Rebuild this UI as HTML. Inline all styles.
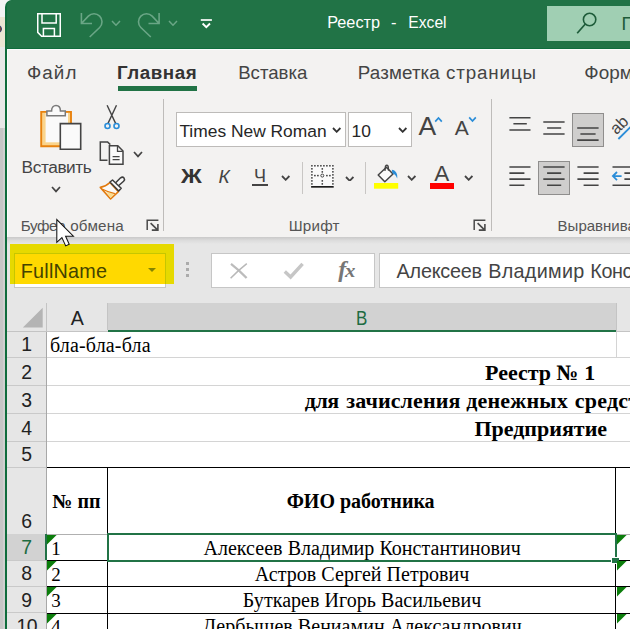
<!DOCTYPE html>
<html lang="ru"><head><meta charset="utf-8"><title>Реестр - Excel</title>
<style>
html,body{margin:0;padding:0;}
body{width:630px;height:629px;overflow:hidden;position:relative;background:#c6c6c6;}
#root{position:absolute;left:0;top:0;width:630px;height:629px;overflow:hidden;isolation:isolate;}
.b{position:absolute;display:block;}
.t{position:absolute;display:block;white-space:pre;}
</style></head><body><div id="root">
<div class="b" style="left:0px;top:0px;width:630px;height:629px;background:#c6c6c6;"></div>
<div class="b" style="left:0px;top:0px;width:16px;height:17px;background:#f3f3f3;"></div>
<div class="b" style="left:0px;top:17px;width:5px;height:30px;background:#ece5d3;"></div>
<div class="b" style="left:0px;top:47px;width:5px;height:81px;background:#e8e8e8;"></div>
<div class="b" style="left:-6px;top:25px;width:8.2px;height:8.2px;background:#9a4a24;border-radius:50%;border:1px solid #2a3f7a;box-sizing:border-box;"></div>
<div class="b" style="left:3px;top:128px;width:2px;height:501px;background:#d0d0d0;"></div>
<div class="b" style="left:5px;top:0;width:625px;height:629px;background:#0f6c3c;border-top-left-radius:7px;overflow:hidden">
<div class="b" style="left:1.6px;top:0;width:624px;height:48px;background:#217346;border-top-left-radius:6px"></div>
<div class="b" style="left:2px;top:49px;width:623px;height:580px;background:#fcfcfc"></div>
<div class="b" style="left:3px;top:50px;width:622px;height:579px;background:#f3f2f1"></div>
</div>
<svg class="b" style="left:36px;top:12px;" width="26" height="26" viewBox="0 0 26 26"><path d="M1.75 1.75 H24.25 V24.25 H5.6 L1.75 20.4 Z M6 1.75 V11 H20.2 V1.75 M7.4 24.25 V16.6 H18.4 V24.25" fill="none" stroke="#fff" stroke-width="1.5"/></svg>
<svg class="b" style="left:79px;top:11px;" width="26" height="28" viewBox="0 0 26 28"><path d="M2.4 2 V12.5 H13 M2.4 12.5 L9.34 5.14 A8 8 0 1 1 20.66 16.46 L10.7 26" fill="none" stroke="#6aa686" stroke-width="1.6"/></svg>
<svg class="b" style="left:111.4px;top:20.2px;" width="10" height="6.2" viewBox="0 0 10 6.2"><path d="M1 1 L5.0 5.2 L9 1" fill="none" stroke="#6aa686" stroke-width="1.5"/></svg>
<svg class="b" style="left:136px;top:11px;" width="26" height="28" viewBox="0 0 26 28"><path d="M23.1 2 V12.5 H12.5 M23.1 12.5 L16.16 5.14 A8 8 0 1 0 4.84 16.46 L14.8 26" fill="none" stroke="#6aa686" stroke-width="1.6"/></svg>
<svg class="b" style="left:168.4px;top:20.2px;" width="10" height="6.2" viewBox="0 0 10 6.2"><path d="M1 1 L5.0 5.2 L9 1" fill="none" stroke="#6aa686" stroke-width="1.5"/></svg>
<svg class="b" style="left:200px;top:18px;" width="13" height="12" viewBox="0 0 13 12"><path d="M0.8 2 H11.9" stroke="#fff" stroke-width="1.7" fill="none"/><path d="M2.6 5.5 L6.3 9.2 L10 5.5" stroke="#fff" stroke-width="1.9" fill="none"/></svg>
<span class="t" style='left:327.20px;top:14px;font:normal 400 16.27px/1 "Liberation Sans", sans-serif;color:#fff;'>Реестр</span>
<span class="t" style='left:391.10px;top:14px;font:normal 400 16.5px/1 "Liberation Sans", sans-serif;color:#fff;letter-spacing:0.516px;'>-</span>
<span class="t" style='left:408.35px;top:15px;font:normal 400 15.65px/1 "Liberation Sans", sans-serif;color:#fff;'>Excel</span>
<div class="b" style="left:547px;top:6px;width:83px;height:35px;background:#a0cfb3;"></div>
<svg class="b" style="left:575px;top:11px;" width="26" height="24" viewBox="0 0 26 24"><circle cx="14.6" cy="8.5" r="6.2" fill="none" stroke="#1e5c3a" stroke-width="1.6"/><path d="M10.3 13 L2.2 22.2" stroke="#1e5c3a" stroke-width="1.7"/></svg>
<span class="t" style='left:621.43px;top:15px;font:normal 400 18.4px/1 "Liberation Sans", sans-serif;color:#1e5c3a;'>П</span>
<span class="t" style='left:26.92px;top:64px;font:normal 400 18.8px/1 "Liberation Sans", sans-serif;color:#444;letter-spacing:1.116px;'>Файл</span>
<span class="t" style='left:117.08px;top:64px;font:normal 700 18.8px/1 "Liberation Sans", sans-serif;color:#333;letter-spacing:0.528px;'>Главная</span>
<div class="b" style="left:118px;top:86.2px;width:78.8px;height:4.4px;background:#217346;"></div>
<span class="t" style='left:238.21px;top:64px;font:normal 400 18.6px/1 "Liberation Sans", sans-serif;color:#444;letter-spacing:-0.01px;'>Вставка</span>
<span class="t" style='left:357.80px;top:64px;font:normal 400 18.8px/1 "Liberation Sans", sans-serif;color:#444;letter-spacing:0.12px;'>Разметка</span>
<span class="t" style='left:446.00px;top:64px;font:normal 400 18.8px/1 "Liberation Sans", sans-serif;color:#444;letter-spacing:0.855px;'>страницы</span>
<span class="t" style='left:584.31px;top:64px;font:normal 400 18.9px/1 "Liberation Sans", sans-serif;color:#444;'>Форм</span>
<svg class="b" style="left:38px;top:103px;" width="46" height="49" viewBox="0 0 46 49">
<path d="M3.2 8.9 H33 V43.2 H3.2 Z" fill="#fad48c" stroke="#e8820e" stroke-width="1.9"/>
<path d="M7.6 10 H30 V39.3 H7.6 Z" fill="#fafafa"/>
<path d="M8.9 12.8 V8 H13.6 C13.6 4.2 15.8 2.6 18 2.6 C20.2 2.6 22.4 4.2 22.4 8 H27.3 V12.8 Z" fill="#fafafa" stroke="#7a7a7a" stroke-width="1.5"/>
<path d="M22.3 20.6 H42.7 V46.2 H22.3 Z" fill="#fafafa" stroke="#444" stroke-width="1.6"/>
</svg>
<span class="t" style='left:21.62px;top:159px;font:normal 400 17.3px/1 "Liberation Sans", sans-serif;color:#444;letter-spacing:-0.433px;'>Вставить</span>
<svg class="b" style="left:51.2px;top:186.4px;" width="10" height="6.4" viewBox="0 0 10 6.4"><path d="M1 1 L5.0 5.4 L9 1" fill="none" stroke="#444" stroke-width="1.7"/></svg>
<svg class="b" style="left:101px;top:103px;" width="22" height="28" viewBox="0 0 22 28">
<path d="M6.1 2.3 L14.6 20.4 M15.5 2.3 L7 20.4" stroke="#444" stroke-width="1.4" fill="none"/>
<circle cx="6.5" cy="23" r="2.5" fill="none" stroke="#2a8dd8" stroke-width="1.6"/>
<circle cx="15.5" cy="23" r="2.5" fill="none" stroke="#2a8dd8" stroke-width="1.6"/>
</svg>
<svg class="b" style="left:98.1px;top:139px;" width="28" height="28" viewBox="0 0 28 28">
<path d="M9.5 21.3 H2.3 V2.9 H9.6 L12.3 5.6" fill="none" stroke="#444" stroke-width="1.5"/>
<path d="M11.4 6.8 H19.8 L25 12 V25.2 H11.4 Z" fill="#fafafa" stroke="#444" stroke-width="1.5"/>
<path d="M19.5 7 V12.3 H24.8" fill="none" stroke="#444" stroke-width="1.3"/>
<path d="M14.6 17.6 H21.6 M14.6 20.7 H21.6" stroke="#444" stroke-width="1.2"/>
</svg>
<svg class="b" style="left:133.2px;top:151.3px;" width="10" height="6.4" viewBox="0 0 10 6.4"><path d="M1 1 L5.0 5.4 L9 1" fill="none" stroke="#444" stroke-width="1.7"/></svg>
<svg class="b" style="left:98px;top:174px;" width="30" height="28" viewBox="0 0 30 28">
<path d="M11.9 8.5 Q7.5 12.6 2.3 13.4 L12.6 25 L20.4 17.7 Z" fill="#fbfaf8" stroke="#e2790c" stroke-width="1.6" stroke-linejoin="round"/>
<path d="M8 17.7 L16.3 20.1 L12.6 23.9 Z" fill="#fbdc8e"/>
<path d="M4.5 15.3 Q10 18.2 16.9 19.6" stroke="#e2790c" stroke-width="1.3" fill="none"/>
<path d="M17.4 9 L22.6 3.8 Q24.6 2.4 26 4 Q27.2 5.6 25.6 7.2 L20.2 12" fill="#fafafa" stroke="#3d3d3d" stroke-width="1.5" stroke-linejoin="round"/>
<path d="M12 8 L14.5 6 L23.2 14.2 L20.7 17 Z" fill="#fafafa" stroke="#3d3d3d" stroke-width="1.5" stroke-linejoin="round"/>
</svg>
<span class="t" style='left:20.78px;top:218px;font:normal 400 15.2px/1 "Liberation Sans", sans-serif;color:#555;letter-spacing:-0.463px;'>Буфер</span>
<span class="t" style='left:70.19px;top:218px;font:normal 400 15.2px/1 "Liberation Sans", sans-serif;color:#555;letter-spacing:0.203px;'>обмена</span>
<svg class="b" style="left:145.5px;top:219.3px;" width="14" height="12" viewBox="0 0 14 12"><path d="M1.2 11 V1.2 H12.4" fill="none" stroke="#4a4a4a" stroke-width="1.5"/><path d="M4.6 4.2 L11.3 10.6 M11.9 5 V11.1 H5.8" fill="none" stroke="#4a4a4a" stroke-width="1.6"/></svg>
<div class="b" style="left:162.8px;top:99px;width:1.1px;height:131.5px;background:#bebcba;"></div>
<div class="b" style="left:176px;top:112px;width:170px;height:35px;background:#fff;border:1px solid #bdbbb9;box-sizing:border-box;"></div>
<span class="t" style='left:179.40px;top:123px;font:normal 400 17.4px/1 "Liberation Sans", sans-serif;color:#262626;'>Times New Roman</span>
<svg class="b" style="left:332.3px;top:127.1px;" width="9.4" height="5.8" viewBox="0 0 9.4 5.8"><path d="M1 1 L4.7 4.8 L8.4 1" fill="none" stroke="#333" stroke-width="1.8"/></svg>
<div class="b" style="left:348px;top:112px;width:64px;height:35px;background:#fff;border:1px solid #bdbbb9;box-sizing:border-box;"></div>
<span class="t" style='left:351.60px;top:123px;font:normal 400 17.4px/1 "Liberation Sans", sans-serif;color:#262626;'>10</span>
<svg class="b" style="left:398.3px;top:127.1px;" width="9.4" height="5.8" viewBox="0 0 9.4 5.8"><path d="M1 1 L4.7 4.8 L8.4 1" fill="none" stroke="#333" stroke-width="1.8"/></svg>
<span class="t" style='left:418.40px;top:113px;font:normal 400 26.5px/1 "Liberation Sans", sans-serif;color:#444;'>A</span>
<svg class="b" style="left:434px;top:116px;" width="9" height="7" viewBox="0 0 9 7"><path d="M1.2 5.6 L4.5 2 L7.8 5.6" fill="none" stroke="#2a8dd8" stroke-width="1.7"/></svg>
<span class="t" style='left:454.80px;top:117px;font:normal 400 21px/1 "Liberation Sans", sans-serif;color:#444;'>A</span>
<svg class="b" style="left:467.6px;top:116px;" width="9" height="7" viewBox="0 0 9 7"><path d="M1.2 1.4 L4.5 5 L7.8 1.4" fill="none" stroke="#2a8dd8" stroke-width="1.7"/></svg>
<span class="t" style='left:181.40px;top:167px;font:normal 700 19.6px/1 "Liberation Sans", sans-serif;color:#333;transform:scaleX(1.1710);transform-origin:0 0;'>Ж</span>
<span class="t" style='left:218.50px;top:167px;font:italic 400 19px/1 "Liberation Sans", sans-serif;color:#444;'>К</span>
<span class="t" style='left:254.00px;top:167px;font:normal 400 18px/1 "Liberation Sans", sans-serif;color:#444;'>Ч</span>
<div class="b" style="left:252.3px;top:184.2px;width:15.4px;height:1.5px;background:#444;"></div>
<svg class="b" style="left:281.3px;top:175.1px;" width="9.4" height="5.8" viewBox="0 0 9.4 5.8"><path d="M1 1 L4.7 4.8 L8.4 1" fill="none" stroke="#444" stroke-width="1.8"/></svg>
<div class="b" style="left:302px;top:162px;width:1px;height:32px;background:#c8c6c4;"></div>
<svg class="b" style="left:310px;top:163px;" width="26" height="26" viewBox="0 0 26 26"><rect x="1.2" y="2" width="22.4" height="22" fill="#fafafa"/><g fill="#333"><rect x="1.15" y="2.05" width="1.5" height="1.5"/><rect x="4.15" y="2.05" width="1.5" height="1.5"/><rect x="7.15" y="2.05" width="1.5" height="1.5"/><rect x="10.15" y="2.05" width="1.5" height="1.5"/><rect x="13.15" y="2.05" width="1.5" height="1.5"/><rect x="16.15" y="2.05" width="1.5" height="1.5"/><rect x="19.15" y="2.05" width="1.5" height="1.5"/><rect x="22.15" y="2.05" width="1.5" height="1.5"/><rect x="1.15" y="5.07" width="1.5" height="1.5"/><rect x="22.15" y="5.07" width="1.5" height="1.5"/><rect x="1.15" y="8.09" width="1.5" height="1.5"/><rect x="22.15" y="8.09" width="1.5" height="1.5"/><rect x="1.15" y="11.11" width="1.5" height="1.5"/><rect x="22.15" y="11.11" width="1.5" height="1.5"/><rect x="1.15" y="14.13" width="1.5" height="1.5"/><rect x="22.15" y="14.13" width="1.5" height="1.5"/><rect x="1.15" y="17.15" width="1.5" height="1.5"/><rect x="22.15" y="17.15" width="1.5" height="1.5"/><rect x="1.15" y="20.17" width="1.5" height="1.5"/><rect x="22.15" y="20.17" width="1.5" height="1.5"/><rect x="4.15" y="11.85" width="1.5" height="1.5"/><rect x="7.15" y="11.85" width="1.5" height="1.5"/><rect x="16.15" y="11.85" width="1.5" height="1.5"/><rect x="19.15" y="11.85" width="1.5" height="1.5"/><rect x="11.55" y="5.15" width="1.5" height="1.5"/><rect x="11.55" y="8.15" width="1.5" height="1.5"/><rect x="11.55" y="17.15" width="1.5" height="1.5"/><rect x="11.55" y="20.15" width="1.5" height="1.5"/></g><circle cx="12.30" cy="12.60" r="1.5" fill="none" stroke="#333" stroke-width="0.9"/><path d="M1.10 23.85 H23.70" stroke="#111" stroke-width="1.6"/></svg>
<svg class="b" style="left:344.6px;top:175.5px;" width="9.4" height="5.8" viewBox="0 0 9.4 5.8"><path d="M1 1 L4.7 4.8 L8.4 1" fill="none" stroke="#444" stroke-width="1.8"/></svg>
<div class="b" style="left:364.8px;top:162px;width:1.1px;height:32px;background:#c8c6c4;"></div>
<svg class="b" style="left:373px;top:162px;" width="27" height="28" viewBox="0 0 27 28">
<path d="M5.2 13 L13.4 5.2 L20 12 L11.8 19.8 Z" fill="#fafafa" stroke="#444" stroke-width="1.5" stroke-linejoin="round"/>
<path d="M11.9 8.8 L12.5 4.2 Q13.8 2.2 15.1 4.2 L15.6 8.6" fill="none" stroke="#444" stroke-width="1.4"/>
<path d="M18.8 7.8 C22.6 8.2 24.9 11.8 24.2 16.4 C23 13.4 21.6 12 19.4 11.2 Z" fill="#2a8dd8"/>
<rect x="1" y="21" width="24.2" height="5.7" fill="#ffff00"/>
</svg>
<svg class="b" style="left:407.1px;top:175.29999999999998px;" width="9.4" height="5.8" viewBox="0 0 9.4 5.8"><path d="M1 1 L4.7 4.8 L8.4 1" fill="none" stroke="#444" stroke-width="1.8"/></svg>
<span class="t" style='left:434.20px;top:163px;font:normal 400 22.5px/1 "Liberation Sans", sans-serif;color:#444;'>A</span>
<div class="b" style="left:430.1px;top:183px;width:23.9px;height:5.7px;background:#ff0000;"></div>
<svg class="b" style="left:463.5px;top:175.1px;" width="9.4" height="5.8" viewBox="0 0 9.4 5.8"><path d="M1 1 L4.7 4.8 L8.4 1" fill="none" stroke="#444" stroke-width="1.8"/></svg>
<span class="t" style='left:288.78px;top:218px;font:normal 400 15.2px/1 "Liberation Sans", sans-serif;color:#555;letter-spacing:0.184px;'>Шрифт</span>
<svg class="b" style="left:473.3px;top:219.3px;" width="14" height="12" viewBox="0 0 14 12"><path d="M1.2 11 V1.2 H12.4" fill="none" stroke="#4a4a4a" stroke-width="1.5"/><path d="M4.6 4.2 L11.3 10.6 M11.9 5 V11.1 H5.8" fill="none" stroke="#4a4a4a" stroke-width="1.6"/></svg>
<div class="b" style="left:491px;top:99px;width:1.1px;height:131.5px;background:#bebcba;"></div>
<svg class="b" style="left:508px;top:115px;" width="24" height="18" viewBox="0 0 24 18"><path d="M1.40 2.80 H22.50 M5.40 8.80 H18.80 M1.40 15.00 H22.50 " stroke="#444" stroke-width="1.6" fill="none"/></svg>
<svg class="b" style="left:542px;top:120px;" width="24" height="17" viewBox="0 0 24 17"><path d="M1.30 2.00 H22.60 M5.10 8.00 H19.20 M1.30 14.00 H22.60 " stroke="#444" stroke-width="1.6" fill="none"/></svg>
<div class="b" style="left:572px;top:113px;width:32px;height:34px;background:#cfcecd;border:1px solid #8f8e8d;box-sizing:border-box;"></div>
<svg class="b" style="left:576px;top:126px;" width="24" height="17" viewBox="0 0 24 17"><path d="M1.20 2.00 H22.60 M4.40 8.00 H19.60 M1.20 14.10 H22.60 " stroke="#444" stroke-width="1.6" fill="none"/></svg>
<svg class="b" style="left:600px;top:105px;" width="30" height="44" viewBox="0 0 30 44"><text transform="translate(19.2,20.2) rotate(-45)" x="0" y="5.2" text-anchor="middle" font-family="Liberation Sans, sans-serif" font-size="16.5" fill="#444">ab</text>
<path d="M18.4 34 L31 21.4" stroke="#2a8dd8" stroke-width="1.8"/></svg>
<svg class="b" style="left:508px;top:165px;" width="24" height="23" viewBox="0 0 24 23"><path d="M1.40 2.00 H22.50 M1.40 8.10 H16.40 M1.40 14.10 H22.50 M1.40 20.30 H16.40 " stroke="#444" stroke-width="1.6" fill="none"/></svg>
<div class="b" style="left:538px;top:161px;width:32px;height:34px;background:#cfcecd;border:1px solid #8f8e8d;box-sizing:border-box;"></div>
<svg class="b" style="left:542px;top:165px;" width="24" height="23" viewBox="0 0 24 23"><path d="M1.30 2.00 H22.60 M5.10 8.10 H19.20 M1.30 14.10 H22.60 M5.10 20.30 H19.20 " stroke="#444" stroke-width="1.6" fill="none"/></svg>
<svg class="b" style="left:576px;top:165px;" width="24" height="23" viewBox="0 0 24 23"><path d="M1.40 2.00 H22.60 M7.60 8.10 H22.60 M1.40 14.10 H22.60 M7.60 20.30 H22.60 " stroke="#444" stroke-width="1.6" fill="none"/></svg>
<svg class="b" style="left:610px;top:160px;" width="20" height="30" viewBox="0 0 20 30"><path d="M2.5 7 H20 M2.5 25.3 H20 M14.4 13.1 H20 M14.4 19.1 H20" stroke="#444" stroke-width="1.6" fill="none"/><path d="M11.6 16.1 H3.2 M7 12 L2.9 16.1 L7 20.2" fill="none" stroke="#2a8dd8" stroke-width="1.8"/></svg>
<span class="t" style='left:557.60px;top:218px;font:normal 400 15.0px/1 "Liberation Sans", sans-serif;color:#555;'>Выравнива</span>
<div class="b" style="left:7px;top:237px;width:623px;height:66px;background:#e6e6e6;"></div>
<div class="b" style="left:7px;top:237px;width:623px;height:7px;background:;background:linear-gradient(#c9c9c9,#dcdcdc 50%,#e6e6e6);"></div>
<div class="b" style="left:14px;top:253px;width:152px;height:35px;background:#fff;border:1px solid #c6c6c6;box-sizing:border-box;"></div>
<div class="b" style="left:10px;top:244px;width:164.2px;height:39.8px;background:#e6d900;overflow:hidden"><div class="b" style="left:4px;top:9px;width:152px;height:35px;background:#ffd900;border:1px solid #c6c600;box-sizing:border-box"></div></div>
<span class="t" style='left:20.72px;top:262px;font:normal 400 19.8px/1 "Liberation Sans", sans-serif;color:#444400;letter-spacing:0.233px;'>FullName</span>
<svg class="b" style="left:147px;top:267px;" width="10" height="6" viewBox="0 0 10 6"><path d="M1 1 H9 L5 5 Z" fill="#858500"/></svg>
<div class="b" style="left:186px;top:262.0px;width:2.6px;height:2.6px;background:#ababab;"></div>
<div class="b" style="left:186px;top:268.0px;width:2.6px;height:2.6px;background:#ababab;"></div>
<div class="b" style="left:186px;top:274.0px;width:2.6px;height:2.6px;background:#ababab;"></div>
<div class="b" style="left:211px;top:253px;width:164px;height:35px;background:#fff;border:1px solid #c6c6c6;box-sizing:border-box;"></div>
<svg class="b" style="left:229px;top:261.5px;" width="20" height="18" viewBox="0 0 20 18"><path d="M2 1.8 Q10 8 17.6 16" stroke="#bcbcbc" stroke-width="2.3" fill="none"/><path d="M17.8 1.6 Q9 8.5 1.6 16.2" stroke="#b8b8b8" stroke-width="1.5" fill="none"/></svg>
<svg class="b" style="left:283px;top:261.5px;" width="22" height="18" viewBox="0 0 22 18"><path d="M1.8 9.6 L7.6 15 L19.6 1.8" stroke="#c6c6c6" stroke-width="3.4" fill="none"/></svg>
<span class="t" style='left:338.20px;top:257px;font:italic 700 24px/1 "Liberation Serif", serif;color:#767676;'>f</span>
<span class="t" style='left:345.40px;top:261px;font:italic 700 19.5px/1 "Liberation Serif", serif;color:#767676;transform:scaleX(1.0675);transform-origin:0 0;'>x</span>
<div class="b" style="left:379px;top:253px;width:260px;height:35px;background:#fff;border:1px solid #c6c6c6;box-sizing:border-box;"></div>
<span class="t" style='left:396.60px;top:262px;font:normal 400 19.8px/1 "Liberation Sans", sans-serif;color:#444;letter-spacing:-0.211px;'>Алексеев</span>
<span class="t" style='left:488.22px;top:262px;font:normal 400 19.8px/1 "Liberation Sans", sans-serif;color:#444;letter-spacing:0.289px;'>Владимир</span>
<span class="t" style='left:590.32px;top:262px;font:normal 400 19.8px/1 "Liberation Sans", sans-serif;color:#444;letter-spacing:-0.421px;'>Константинович</span>
<div class="b" style="left:7px;top:303px;width:623px;height:326px;background:#fff;"></div>
<div class="b" style="left:7px;top:303px;width:623px;height:28.5px;background:#e6e6e6;"></div>
<div class="b" style="left:107.5px;top:303px;width:508.5px;height:27px;background:#d2d2d2;"></div>
<div class="b" style="left:107.5px;top:329.8px;width:508.5px;height:2.2px;background:#217346;"></div>
<div class="b" style="left:46px;top:303px;width:1px;height:29px;background:#c4c4c4;"></div>
<div class="b" style="left:107px;top:303px;width:1px;height:27px;background:#c4c4c4;"></div>
<div class="b" style="left:616px;top:303px;width:1px;height:29px;background:#c4c4c4;"></div>
<div class="b" style="left:7px;top:331px;width:101px;height:1px;background:#c4c4c4;"></div>
<div class="b" style="left:616px;top:331px;width:14px;height:1px;background:#c4c4c4;"></div>
<svg class="b" style="left:22px;top:307px;" width="22" height="22" viewBox="0 0 22 22"><path d="M20.7 0.8 V20.6 H0.9 Z" fill="#b4b4b4"/></svg>
<span class="t" style='left:46.50px;top:309px;font:normal 400 19.6px/1 "Liberation Sans", sans-serif;color:#222;width:61.5px;text-align:center;'>A</span>
<span class="t" style='left:356.24px;top:309px;font:normal 400 19.6px/1 "Liberation Sans", sans-serif;color:#1e6b41;transform:scaleX(0.8678);transform-origin:0 0;'>B</span>
<div class="b" style="left:7px;top:332px;width:39.5px;height:297px;background:#e6e6e6;"></div>
<div class="b" style="left:46px;top:332px;width:1px;height:297px;background:#a8a8a8;"></div>
<div class="b" style="left:7px;top:356.8px;width:39px;height:1px;background:#c9c9c9;"></div>
<span class="t" style='left:7.00px;top:335px;font:normal 400 19.4px/1 "Liberation Sans", sans-serif;color:#222;width:39.5px;text-align:center;'>1</span>
<div class="b" style="left:7px;top:385.0px;width:39px;height:1px;background:#c9c9c9;"></div>
<span class="t" style='left:7.00px;top:363px;font:normal 400 19.4px/1 "Liberation Sans", sans-serif;color:#222;width:39.5px;text-align:center;'>2</span>
<div class="b" style="left:7px;top:412.8px;width:39px;height:1px;background:#c9c9c9;"></div>
<span class="t" style='left:7.00px;top:391px;font:normal 400 19.4px/1 "Liberation Sans", sans-serif;color:#222;width:39.5px;text-align:center;'>3</span>
<div class="b" style="left:7px;top:440.8px;width:39px;height:1px;background:#c9c9c9;"></div>
<span class="t" style='left:7.00px;top:419px;font:normal 400 19.4px/1 "Liberation Sans", sans-serif;color:#222;width:39.5px;text-align:center;'>4</span>
<div class="b" style="left:7px;top:467.0px;width:39px;height:1px;background:#c9c9c9;"></div>
<span class="t" style='left:7.00px;top:445px;font:normal 400 19.4px/1 "Liberation Sans", sans-serif;color:#222;width:39.5px;text-align:center;'>5</span>
<div class="b" style="left:7px;top:533.7px;width:39px;height:1px;background:#c9c9c9;"></div>
<span class="t" style='left:7.00px;top:512px;font:normal 400 19.4px/1 "Liberation Sans", sans-serif;color:#222;width:39.5px;text-align:center;'>6</span>
<div class="b" style="left:7px;top:534.2px;width:39px;height:26.299999999999955px;background:#d2d2d2;"></div>
<div class="b" style="left:44.7px;top:534.2px;width:2.2px;height:26.299999999999955px;background:#217346;"></div>
<div class="b" style="left:7px;top:560.0px;width:39px;height:1px;background:#c9c9c9;"></div>
<span class="t" style='left:7.00px;top:538px;font:normal 400 19.4px/1 "Liberation Sans", sans-serif;color:#1e6b41;width:39.5px;text-align:center;'>7</span>
<div class="b" style="left:7px;top:586.0px;width:39px;height:1px;background:#c9c9c9;"></div>
<span class="t" style='left:7.00px;top:564px;font:normal 400 19.4px/1 "Liberation Sans", sans-serif;color:#222;width:39.5px;text-align:center;'>8</span>
<div class="b" style="left:7px;top:612.2px;width:39px;height:1px;background:#c9c9c9;"></div>
<span class="t" style='left:7.00px;top:591px;font:normal 400 19.4px/1 "Liberation Sans", sans-serif;color:#222;width:39.5px;text-align:center;'>9</span>
<div class="b" style="left:7px;top:638.5px;width:39px;height:1px;background:#c9c9c9;"></div>
<span class="t" style='left:7.00px;top:617px;font:normal 400 19.4px/1 "Liberation Sans", sans-serif;color:#222;letter-spacing:-0.6px;width:39.5px;text-align:center;'>10</span>
<div class="b" style="left:47px;top:356.8px;width:583px;height:1px;background:#d4d4d4;"></div>
<div class="b" style="left:47px;top:385.0px;width:583px;height:1px;background:#d4d4d4;"></div>
<div class="b" style="left:47px;top:412.8px;width:583px;height:1px;background:#d4d4d4;"></div>
<div class="b" style="left:47px;top:440.8px;width:583px;height:1px;background:#d4d4d4;"></div>
<div class="b" style="left:47px;top:533.7px;width:60px;height:1px;background:#b0b0b0;"></div>
<div class="b" style="left:617px;top:533.7px;width:13px;height:1px;background:#b0b0b0;"></div>
<div class="b" style="left:616px;top:332px;width:1px;height:25.5px;background:#d4d4d4;"></div>
<div class="b" style="left:47px;top:467px;width:583px;height:1.2px;background:#000;"></div>
<div class="b" style="left:47px;top:560.1px;width:583px;height:1.2px;background:#000;"></div>
<div class="b" style="left:47px;top:586.1999999999999px;width:583px;height:1.2px;background:#000;"></div>
<div class="b" style="left:47px;top:612.5px;width:583px;height:1.2px;background:#000;"></div>
<div class="b" style="left:107px;top:467px;width:1.2px;height:162px;background:#000;"></div>
<div class="b" style="left:615.2px;top:467px;width:1.2px;height:162px;background:#000;"></div>
<div class="b" style="left:106.6px;top:533.2px;width:510px;height:28.6px;background:;border:2px solid #217346;box-sizing:border-box;"></div>
<div class="b" style="left:611.2px;top:556.6px;width:8px;height:7.4px;background:#fff;"></div>
<div class="b" style="left:612.2px;top:557.6px;width:6.4px;height:5.8px;background:#217346;"></div>
<svg class="b" style="left:46.8px;top:534.7px;" width="11" height="11" viewBox="0 0 11 11"><path d="M0 0 H9.6 L0 9.6 Z" fill="#0b7d0b"/></svg>
<svg class="b" style="left:616.6px;top:534.7px;" width="11" height="11" viewBox="0 0 11 11"><path d="M0 0 H9.6 L0 9.6 Z" fill="#0b7d0b"/></svg>
<svg class="b" style="left:46.8px;top:561.3px;" width="11" height="11" viewBox="0 0 11 11"><path d="M0 0 H9.6 L0 9.6 Z" fill="#0b7d0b"/></svg>
<svg class="b" style="left:616.6px;top:561.3px;" width="11" height="11" viewBox="0 0 11 11"><path d="M0 0 H9.6 L0 9.6 Z" fill="#0b7d0b"/></svg>
<svg class="b" style="left:46.8px;top:587.4px;" width="11" height="11" viewBox="0 0 11 11"><path d="M0 0 H9.6 L0 9.6 Z" fill="#0b7d0b"/></svg>
<svg class="b" style="left:616.6px;top:587.4px;" width="11" height="11" viewBox="0 0 11 11"><path d="M0 0 H9.6 L0 9.6 Z" fill="#0b7d0b"/></svg>
<svg class="b" style="left:46.8px;top:613.7px;" width="11" height="11" viewBox="0 0 11 11"><path d="M0 0 H9.6 L0 9.6 Z" fill="#0b7d0b"/></svg>
<svg class="b" style="left:616.6px;top:613.7px;" width="11" height="11" viewBox="0 0 11 11"><path d="M0 0 H9.6 L0 9.6 Z" fill="#0b7d0b"/></svg>
<span class="t" style='left:50.00px;top:335px;font:normal 400 20px/1 "Liberation Serif", serif;color:#000;letter-spacing:0.16px;'>бла-бла-бла</span>
<span class="t" style='left:485.00px;top:362px;font:normal 700 22px/1 "Liberation Serif", serif;color:#000;'>Реестр № 1</span>
<span class="t" style='left:304.78px;top:390px;font:normal 700 22px/1 "Liberation Serif", serif;color:#000;letter-spacing:-0.448px;'>для</span>
<span class="t" style='left:346.18px;top:390px;font:normal 700 22px/1 "Liberation Serif", serif;color:#000;letter-spacing:0.126px;'>зачисления</span>
<span class="t" style='left:466.18px;top:390px;font:normal 700 22px/1 "Liberation Serif", serif;color:#000;letter-spacing:0.196px;'>денежных</span>
<span class="t" style='left:574.68px;top:390px;font:normal 700 22px/1 "Liberation Serif", serif;color:#000;letter-spacing:0.25px;'>средств</span>
<span class="t" style='left:474.40px;top:418px;font:normal 700 22px/1 "Liberation Serif", serif;color:#000;'>Предприятие</span>
<span class="t" style='left:52.30px;top:491px;font:normal 700 20px/1 "Liberation Serif", serif;color:#000;'>№ пп</span>
<span class="t" style='left:106.90px;top:491px;font:normal 700 20px/1 "Liberation Serif", serif;color:#000;width:507.5px;text-align:center;'>ФИО работника</span>
<span class="t" style='left:108.40px;top:538px;font:normal 400 20px/1 "Liberation Serif", serif;color:#000;letter-spacing:0.04px;width:507.5px;text-align:center;'>Алексеев Владимир Константинович</span>
<span class="t" style='left:51.20px;top:539px;font:normal 400 19px/1 "Liberation Serif", serif;color:#000;'>1</span>
<span class="t" style='left:108.40px;top:564px;font:normal 400 20px/1 "Liberation Serif", serif;color:#000;letter-spacing:0.04px;width:507.5px;text-align:center;'>Астров Сергей Петрович</span>
<span class="t" style='left:51.20px;top:565px;font:normal 400 19px/1 "Liberation Serif", serif;color:#000;'>2</span>
<span class="t" style='left:108.40px;top:590px;font:normal 400 20px/1 "Liberation Serif", serif;color:#000;letter-spacing:0.04px;width:507.5px;text-align:center;'>Буткарев Игорь Васильевич</span>
<span class="t" style='left:51.20px;top:591px;font:normal 400 19px/1 "Liberation Serif", serif;color:#000;'>3</span>
<span class="t" style='left:108.40px;top:616px;font:normal 400 20px/1 "Liberation Serif", serif;color:#000;letter-spacing:0.04px;width:507.5px;text-align:center;'>Дербышев Вениамин Александрович</span>
<span class="t" style='left:51.20px;top:617px;font:normal 400 19px/1 "Liberation Serif", serif;color:#000;'>4</span>
<svg class="b" style="left:54.5px;top:218px;" width="22" height="30" viewBox="0 0 22 30"><path d="M1.8 1.6 V24.4 L6.9 19.6 L10.7 27.9 L14.2 26.3 L10.6 18.2 H18.4 Z" fill="#fff" stroke="#111" stroke-width="1.05" stroke-linejoin="miter"/></svg>
</div></body></html>
